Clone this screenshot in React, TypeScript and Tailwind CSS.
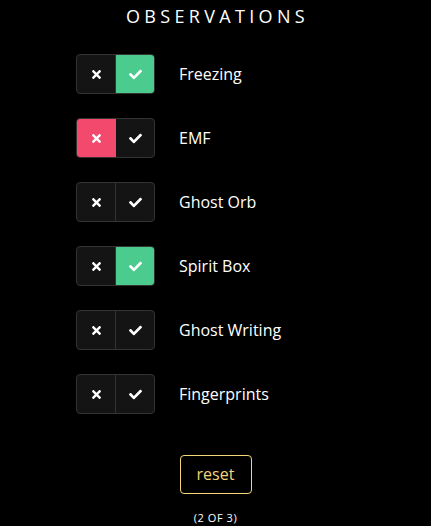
import { FaTimes, FaCheck } from "react-icons/fa";

const ROWS: { name: string; state: "yes" | "no" | null }[] = [
  { name: "Freezing", state: "yes" },
  { name: "EMF", state: "no" },
  { name: "Ghost Orb", state: null },
  { name: "Spirit Box", state: "yes" },
  { name: "Ghost Writing", state: null },
  { name: "Fingerprints", state: null },
];

function Toggle({ state }: { state: "yes" | "no" | null }) {
  return (
    <div className="flex h-[40px] w-[79px] overflow-hidden rounded-[4px] border border-[#333333] bg-[#141414]">
      <div
        className={
          "flex w-[39px] items-center justify-center border-r border-[#333333] " +
          (state === "no" ? "bg-[#f2496d] border-r-[#f2496d]" : "")
        }
      >
        <FaTimes className="text-white" size={13} />
      </div>
      <div
        className={
          "flex flex-1 items-center justify-center " + (state === "yes" ? "bg-[#4ccb8f]" : "")
        }
      >
        <FaCheck className="text-white" size={13} />
      </div>
    </div>
  );
}

export default function App() {
  return (
    <div
      className="flex h-[526px] w-[431px] flex-col bg-black text-white"
      style={{ fontFamily: '"Open Sans", "Noto Sans", sans-serif' }}
    >
      <h1 className="mt-[5px] h-[22px] pl-[4px] text-center text-[18px] leading-[22px] tracking-[0.24em]">
        OBSERVATIONS
      </h1>
      <div className="mt-[27px] flex flex-col gap-[24px] pl-[76px]">
        {ROWS.map((r) => (
          <div key={r.name} className="flex items-center gap-[24px]">
            <Toggle state={r.state} />
            <span className="text-[16px]">{r.name}</span>
          </div>
        ))}
      </div>
      <div className="mt-[41px] flex justify-center">
        <button className="h-[39px] w-[72px] rounded-[4px] border border-[#f3d57a] pb-[2px] text-[16px] text-[#f3d57a]">
          reset
        </button>
      </div>
      <div className="mt-[16px] text-center text-[11px] tracking-[0.05em]">(2 OF 3)</div>
    </div>
  );
}
